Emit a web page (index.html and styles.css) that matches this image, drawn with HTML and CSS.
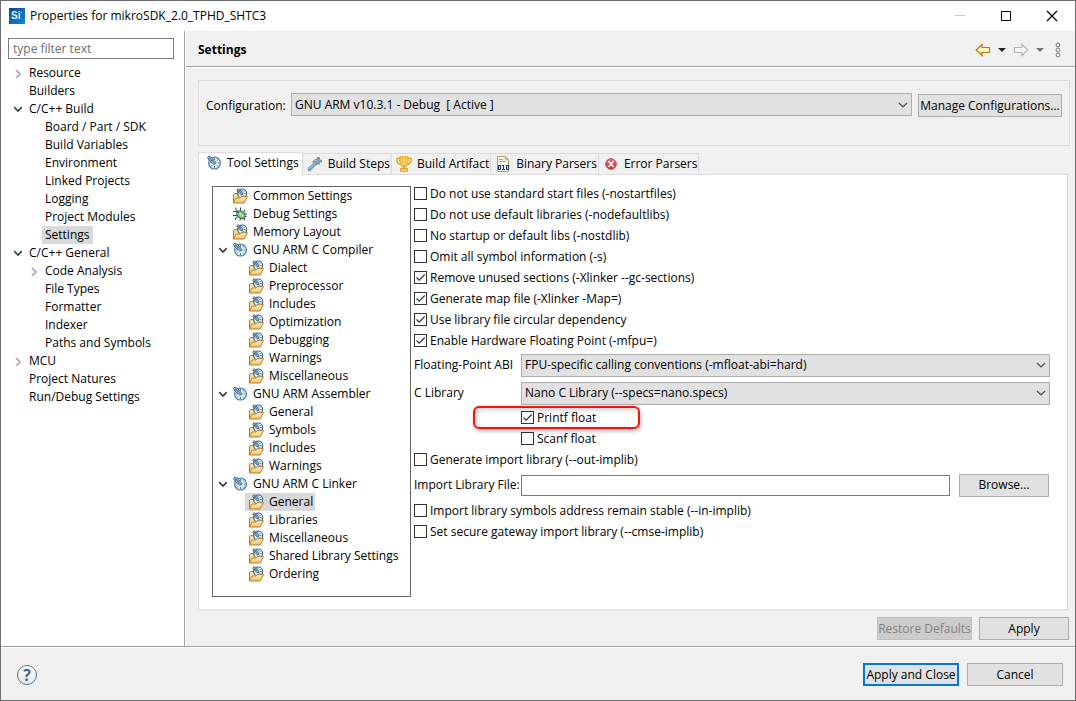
FILE: index.html
```html
<!DOCTYPE html>
<html lang="en">
<head>
<meta charset="utf-8">
<title>Properties for mikroSDK_2.0_TPHD_SHTC3</title>
<link rel="stylesheet" href="styles.css">
</head>
<body>
<svg class="sprite" aria-hidden="true">
  <defs>
    <linearGradient id="g-fold" x1="0" y1="0" x2="0" y2="1"><stop offset="0" stop-color="#fff3cf"/><stop offset="1" stop-color="#f3bd5c"/></linearGradient>
    <linearGradient id="g-red" x1="0" y1="0" x2="0" y2="1"><stop offset="0" stop-color="#e8727a"/><stop offset="1" stop-color="#d8232f"/></linearGradient>
    <linearGradient id="g-si" x1="0" y1="0" x2="1" y2="1"><stop offset="0" stop-color="#0b4a94"/><stop offset="1" stop-color="#1487d8"/></linearGradient>
  </defs>
  <symbol id="down" viewBox="0 0 10 10"><path d="M1.2 3.2 5 7l3.800-3.800" fill="none" stroke="#404040" stroke-width="1.700"/></symbol>
  <symbol id="right" viewBox="0 0 10 10"><path d="M3 2l4 4-4 4" fill="none" stroke="#a6a6a6" stroke-width="1.700"/></symbol>
  <symbol id="chev" viewBox="0 0 10 10"><path d="M1 3l4 4 4-4" fill="none" stroke="#505050" stroke-width="1.200"/></symbol>
  <symbol id="gauge" viewBox="0 0 16 16">
    <circle cx="8.500" cy="8" r="5.900" fill="#e4f1f8" stroke="#5585a6" stroke-width="1.300"/>
    <path d="M8.500 3v2M8.500 11v2M3.500 8h2M11.500 8h2M5 11.500l1.300-1.300M12 4.500l-1.200 1.200M12 11.500l-1.200-1.200" stroke="#4b84aa" stroke-width="1"/>
    <path d="M1.500 2.500 3 1l2.500 1.500L10 7.500 9 9 7.500 9 3 5Z" fill="#bcd0dc" stroke="#395b75" stroke-width=".9"/>
    <path d="M3 2.500l6 6M5 2.500l-2 2M7 4.500l-2 2" stroke="#203f59" stroke-width=".8"/>
  </symbol>
  <symbol id="folder" viewBox="0 0 16 16">
    <path d="M1.500 14V6.500l1-1h3l1 1.500H13v5" fill="#f8dd9c" stroke="#b47a2c"/>
    <circle cx="10.200" cy="5.500" r="4.500" fill="#e4f1f8" stroke="#35688f" stroke-width="1.200"/>
    <path d="M10 2v1.500M13.500 5.500H12M10 9V7.500M12.500 3l-1 1M12.500 8l-1-1" stroke="#387ba8" stroke-width=".9"/>
    <path d="M5 1.500 6.200.7 11 5.200 10.500 6.800 9 6.500 5 3Z" fill="#c7d9e3" stroke="#274861" stroke-width=".8"/>
    <path d="M6 1.800l4 4M8 2.500 6.500 4" stroke="#203f59" stroke-width=".7"/>
    <path d="M1.200 15 4 10H8l1-1.300h6.500L12 15Z" fill="url(#g-fold)" stroke="#b8812f"/>
  </symbol>
  <symbol id="bug" viewBox="0 0 16 16">
    <path d="M4 1.500v3l2 1.500M8.500 1.500v4M1 5.500h3l2 1.500M1 9.500h4M3.500 14v-2L6 10.500M8 14.500l.5-2.500M12.500 14.500 12 11.500M12 6l1-2.500M12 8h3M12.500 10.500h2" fill="none" stroke="#2b4f48" stroke-width="1"/>
    <ellipse cx="9" cy="8.800" rx="4.500" ry="3.400" transform="rotate(38 9 8.800)" fill="#8fc476" stroke="#22604d"/>
    <circle cx="5.700" cy="5.800" r="1.500" fill="#3f7b63"/>
    <path d="M7.500 7l4 3.500" stroke="#d3edb9" stroke-width="1.200"/>
  </symbol>
  <symbol id="wrench" viewBox="0 0 16 16">
    <path d="M.8 12 6 7.300l2.500 2.500L3.500 15H.8Z" fill="#7f9bad"/>
    <path d="M2 12.700l4-3.500" stroke="#c0cfd9"/>
    <path d="M5 6l3-3 2-.5V1h3v2.500l2 .5v2.500h-2V8.500h-2.500L8.500 9.800Z" fill="#7f9bad"/>
    <path d="M7.500 5l1.500-1 2 2.200" fill="none" stroke="#a9bfcc"/>
  </symbol>
  <symbol id="trophy" viewBox="0 0 16 16">
    <path d="M4 2.500H1v3.500l2 2h2M12 2.500h3v3.500l-2 2h-2" fill="none" stroke="#e9a51e" stroke-width="1.400"/>
    <path d="M4 .8h8v7L10 10H6L4 7.800Z" fill="#fbd46b" stroke="#e9a51e" stroke-width="1.200"/>
    <path d="M6.700 2v6M9.500 2v6" stroke="#eeb33b"/>
    <path d="M7 10h2v2H7ZM4.500 12.500h7v2.800h-7Z" fill="#f9cf62" stroke="#e3a027"/>
  </symbol>
  <symbol id="binary" viewBox="0 0 16 16">
    <path d="M2.500 15.500V.5h8L13.500 4v11.500Z" fill="#fbfaf0" stroke="#a99f72"/>
    <path d="M10.500.5V4H13.500Z" fill="#e8cf85" stroke="#b6a264" stroke-width=".7"/>
    <path d="M4 3.500h4M4 5.500h7" stroke="#86a5cd"/>
    <path d="M3.500 9.500h2v4h-2ZM7 9.500h1.500v4M7 13.500h3M11.500 9.500h2v4h-2Z" fill="none" stroke="#233f6f" stroke-width="1.200"/>
  </symbol>
  <symbol id="error" viewBox="0 0 16 16">
    <circle cx="8" cy="8" r="5.300" fill="url(#g-red)" stroke="#cf4850"/>
    <path d="M5.500 5l5 6M10.500 5l-5 6" stroke="#fff" stroke-width="1.700"/>
  </symbol>
</svg>

<div class="window">
  <header class="titlebar">
    <svg class="applogo" viewBox="0 0 16 16" aria-hidden="true"><rect width="16" height="16" fill="url(#g-si)"/><text class="logotext" x="2" y="11">Si</text><circle cx="12.500" cy="4.500" r=".8" fill="#7cc4f4"/></svg>
    <h1 class="wintitle">Properties for mikroSDK_2.0_TPHD_SHTC3</h1>
    <button class="winbtn" aria-label="Minimize"><svg viewBox="0 0 12 12"><path d="M1 5.500h10" stroke="#c8c8c8"/></svg></button>
    <button class="winbtn" aria-label="Maximize"><svg viewBox="0 0 12 12"><path d="M1.500 1.500h9v9h-9Z" fill="none" stroke="#000"/></svg></button>
    <button class="winbtn" aria-label="Close"><svg viewBox="0 0 12 12"><path d="M1 1l10 10M11 1 1 11" stroke="#000" stroke-width="1.200"/></svg></button>
  </header>

  <div class="body">
    <nav class="side">
      <input class="field filter" type="text" placeholder="type filter text" aria-label="Filter">
      <ul class="tree" role="tree">
        <li><svg class="arrow"><use href="#right"/></svg><span class="name">Resource</span></li>
        <li><i class="arrow"></i><span class="name">Builders</span></li>
        <li><svg class="arrow"><use href="#down"/></svg><span class="name">C/C++ Build</span></li>
        <li class="sub"><i class="arrow"></i><span class="name">Board / Part / SDK</span></li>
        <li class="sub"><i class="arrow"></i><span class="name">Build Variables</span></li>
        <li class="sub"><i class="arrow"></i><span class="name">Environment</span></li>
        <li class="sub"><i class="arrow"></i><span class="name">Linked Projects</span></li>
        <li class="sub"><i class="arrow"></i><span class="name">Logging</span></li>
        <li class="sub"><i class="arrow"></i><span class="name">Project Modules</span></li>
        <li class="sub"><i class="arrow"></i><span class="name selected">Settings</span></li>
        <li><svg class="arrow"><use href="#down"/></svg><span class="name">C/C++ General</span></li>
        <li class="sub"><svg class="arrow"><use href="#right"/></svg><span class="name">Code Analysis</span></li>
        <li class="sub"><i class="arrow"></i><span class="name">File Types</span></li>
        <li class="sub"><i class="arrow"></i><span class="name">Formatter</span></li>
        <li class="sub"><i class="arrow"></i><span class="name">Indexer</span></li>
        <li class="sub"><i class="arrow"></i><span class="name">Paths and Symbols</span></li>
        <li><svg class="arrow"><use href="#right"/></svg><span class="name">MCU</span></li>
        <li><i class="arrow"></i><span class="name">Project Natures</span></li>
        <li><i class="arrow"></i><span class="name">Run/Debug Settings</span></li>
      </ul>
    </nav>

    <main class="main">
      <div class="pagehead">
        <h2 class="pagetitle">Settings</h2>
        <div class="navtools">
          <button class="tool" aria-label="Back"><svg width="16" height="14" viewBox="0 0 16 14"><path d="M1.200 7 7 1.500V4.500h7.500v5H7v3Z" fill="#fff3c4" stroke="#b57a14" stroke-width="1.200"/></svg></button>
          <button class="tool" aria-label="Back history"><svg width="8" height="4" viewBox="0 0 8 4"><path d="M0 0h8L4 4Z" fill="#222"/></svg></button>
          <button class="tool" aria-label="Forward"><svg width="16" height="14" viewBox="0 0 16 14"><path d="M14.800 7 9 1.500V4.500H1.500v5H9v3Z" fill="#f5f5f5" stroke="#b5b5b5" stroke-width="1.200"/></svg></button>
          <button class="tool" aria-label="Forward history"><svg width="8" height="4" viewBox="0 0 8 4"><path d="M0 0h8L4 4Z" fill="#777"/></svg></button>
          <button class="tool more" aria-label="Menu"><svg width="8" height="16" viewBox="0 0 8 16"><g fill="#fff" stroke="#777"><circle cx="4" cy="3" r="1.900"/><circle cx="4" cy="8" r="1.900"/><circle cx="4" cy="13" r="1.900"/></g></svg></button>
        </div>
      </div>

      <div class="content">
        <div class="config">
          <label for="cfg">Configuration:</label>
          <span class="combo"><select id="cfg"><option>GNU ARM v10.3.1 - Debug&nbsp; [ Active ]</option></select><svg><use href="#chev"/></svg></span>
          <button class="btn manage">Manage Configurations...</button>
        </div>

        <div class="tabs" role="tablist">
          <button class="tab active" role="tab" aria-selected="true"><svg><use href="#gauge"/></svg>Tool Settings</button>
          <button class="tab" role="tab"><svg><use href="#wrench"/></svg>Build Steps</button>
          <button class="tab" role="tab"><svg><use href="#trophy"/></svg>Build Artifact</button>
          <button class="tab" role="tab"><svg><use href="#binary"/></svg>Binary Parsers</button>
          <button class="tab" role="tab"><svg><use href="#error"/></svg>Error Parsers</button>
        </div>

        <section class="panel" role="tabpanel">
          <ul class="tooltree" role="tree">
            <li><i class="arrow"></i><span class="node"><svg><use href="#folder"/></svg>Common Settings</span></li>
            <li><i class="arrow"></i><span class="node"><svg><use href="#bug"/></svg>Debug Settings</span></li>
            <li><i class="arrow"></i><span class="node"><svg><use href="#folder"/></svg>Memory Layout</span></li>
            <li><svg class="arrow"><use href="#down"/></svg><span class="node"><svg><use href="#gauge"/></svg>GNU ARM C Compiler</span></li>
            <li class="sub"><i class="arrow"></i><span class="node"><svg><use href="#folder"/></svg>Dialect</span></li>
            <li class="sub"><i class="arrow"></i><span class="node"><svg><use href="#folder"/></svg>Preprocessor</span></li>
            <li class="sub"><i class="arrow"></i><span class="node"><svg><use href="#folder"/></svg>Includes</span></li>
            <li class="sub"><i class="arrow"></i><span class="node"><svg><use href="#folder"/></svg>Optimization</span></li>
            <li class="sub"><i class="arrow"></i><span class="node"><svg><use href="#folder"/></svg>Debugging</span></li>
            <li class="sub"><i class="arrow"></i><span class="node"><svg><use href="#folder"/></svg>Warnings</span></li>
            <li class="sub"><i class="arrow"></i><span class="node"><svg><use href="#folder"/></svg>Miscellaneous</span></li>
            <li><svg class="arrow"><use href="#down"/></svg><span class="node"><svg><use href="#gauge"/></svg>GNU ARM Assembler</span></li>
            <li class="sub"><i class="arrow"></i><span class="node"><svg><use href="#folder"/></svg>General</span></li>
            <li class="sub"><i class="arrow"></i><span class="node"><svg><use href="#folder"/></svg>Symbols</span></li>
            <li class="sub"><i class="arrow"></i><span class="node"><svg><use href="#folder"/></svg>Includes</span></li>
            <li class="sub"><i class="arrow"></i><span class="node"><svg><use href="#folder"/></svg>Warnings</span></li>
            <li><svg class="arrow"><use href="#down"/></svg><span class="node"><svg><use href="#gauge"/></svg>GNU ARM C Linker</span></li>
            <li class="sub"><i class="arrow"></i><span class="node selected"><svg><use href="#folder"/></svg>General</span></li>
            <li class="sub"><i class="arrow"></i><span class="node"><svg><use href="#folder"/></svg>Libraries</span></li>
            <li class="sub"><i class="arrow"></i><span class="node"><svg><use href="#folder"/></svg>Miscellaneous</span></li>
            <li class="sub"><i class="arrow"></i><span class="node"><svg><use href="#folder"/></svg>Shared Library Settings</span></li>
            <li class="sub"><i class="arrow"></i><span class="node"><svg><use href="#folder"/></svg>Ordering</span></li>
          </ul>

          <form class="options">
            <label class="check"><input type="checkbox">Do not use standard start files (-nostartfiles)</label>
            <label class="check"><input type="checkbox">Do not use default libraries (-nodefaultlibs)</label>
            <label class="check"><input type="checkbox">No startup or default libs (-nostdlib)</label>
            <label class="check"><input type="checkbox">Omit all symbol information (-s)</label>
            <label class="check"><input type="checkbox" checked>Remove unused sections (-Xlinker --gc-sections)</label>
            <label class="check"><input type="checkbox" checked>Generate map file (-Xlinker -Map=)</label>
            <label class="check"><input type="checkbox" checked>Use library file circular dependency</label>
            <label class="check"><input type="checkbox" checked>Enable Hardware Floating Point (-mfpu=)</label>
            <div class="row">
              <label for="abi">Floating-Point ABI</label>
              <span class="combo"><select id="abi"><option>FPU-specific calling conventions (-mfloat-abi=hard)</option></select><svg><use href="#chev"/></svg></span>
            </div>
            <div class="row">
              <label for="clib">C Library</label>
              <span class="combo"><select id="clib"><option>Nano C Library (--specs=nano.specs)</option></select><svg><use href="#chev"/></svg></span>
            </div>
            <label class="check nested marked"><span class="marker"></span><input type="checkbox" checked>Printf float</label>
            <label class="check nested"><input type="checkbox">Scanf float</label>
            <label class="check"><input type="checkbox">Generate import library (--out-implib)</label>
            <div class="row file">
              <label for="implib">Import Library File:</label>
              <span class="filebox"><input class="field" id="implib" type="text"><button class="btn" type="button">Browse...</button></span>
            </div>
            <label class="check"><input type="checkbox">Import library symbols address remain stable (--in-implib)</label>
            <label class="check"><input type="checkbox">Set secure gateway import library (--cmse-implib)</label>
          </form>
        </section>

        <div class="pageactions">
          <button class="btn restore" disabled>Restore Defaults</button>
          <button class="btn">Apply</button>
        </div>
      </div>
    </main>
  </div>

  <footer class="footer">
    <button class="help" aria-label="Help">?</button>
    <button class="btn wide primary">Apply and Close</button>
    <button class="btn wide">Cancel</button>
  </footer>
</div>
</body>
</html>
```
FILE: styles.css
```css
* { box-sizing: border-box; }
body {
  margin: 0;
  font: 12px/18px "Open Sans", "Noto Sans", sans-serif;
  color: #000;
}
button, input, select { font: inherit; color: inherit; margin: 0; padding: 0; }
ul { list-style: none; margin: 0; padding: 0; }
h1, h2 { margin: 0; font-size: 12px; }
svg { flex: none; }
.sprite { position: absolute; width: 0; height: 0; }

.window {
  display: flex;
  flex-direction: column;
  min-height: 100vh;
  background: #f0f0f0;
  border: 1px solid #6e6e6e;
}

.titlebar { display: flex; align-items: center; height: 30px; padding-left: 8px; background: #fff; }
.applogo { width: 16px; height: 16px; margin-right: 5px; }
.logotext { font: bold 10px "Liberation Sans", sans-serif; fill: #d8efff; }
.wintitle { flex: 1; font-weight: normal; }
.winbtn { display: grid; place-items: center; width: 46px; height: 30px; border: 0; background: none; }
.winbtn svg { width: 12px; height: 12px; }

.body { flex: 1; display: flex; border-bottom: 1px solid #a0a0a0; }
.side { width: 184px; padding: 7px 10px 0 7px; background: #fff; border-right: 1px solid #a0a0a0; }
.field { height: 21px; border: 1px solid #7a7a7a; background: #fff; border-radius: 0; }
.filter { width: 100%; padding: 0 4px; }
.filter::placeholder { color: #6d6d6d; opacity: 1; }
.tree { padding-top: 5px; white-space: nowrap; }
.tree li { display: flex; align-items: center; height: 18px; padding-left: 5px; }
.tree li.sub { padding-left: 21px; }
.arrow { width: 10px; height: 10px; flex: none; }
.name { margin-left: 3px; padding: 0 3px; }
.selected { background: #d9d9d9; }

.main { flex: 1; min-width: 0; display: flex; flex-direction: column; border-left: 1px solid #fff; }
.pagehead {
  display: flex;
  align-items: center;
  justify-content: space-between;
  height: 36px;
  padding: 3px 13px 0 12px;
  border-bottom: 1px solid #a0a0a0;
}
.pagetitle { font-weight: bold; }
.navtools { display: flex; align-items: center; gap: 7px; }
.tool { display: grid; place-items: center; padding: 0; border: 0; background: none; }
.more { margin-left: 3px; }

.content { flex: 1; display: flex; flex-direction: column; padding: 12px 5px 6px 12px; border-top: 1px solid #fff; }
.config { display: flex; align-items: flex-start; height: 66px; padding: 12px 7px; border: 1px solid #dcdcdc; }
.config label { width: 85px; line-height: 25px; white-space: nowrap; }
.config .combo { flex: 1; }

.combo { display: grid; }
.combo > * { grid-area: 1 / 1; }
.combo select {
  appearance: none;
  width: 100%;
  height: 23px;
  padding: 0 24px 0 3px;
  border: 1px solid #adadad;
  border-radius: 0;
  background: #e1e1e1;
}
.combo svg { width: 10px; height: 10px; margin-right: 4px; place-self: center end; pointer-events: none; }

.btn {
  width: 90px;
  height: 23px;
  border: 1px solid #adadad;
  background: #e1e1e1;
  white-space: nowrap;
  line-height: 18px;
}
.btn:disabled { background: #ccc; border-color: #bfbfbf; color: #838383; }
.btn.wide { width: 96px; }
.btn.manage { width: 144px; margin: 1px 0 0 6px; }
.btn.restore { width: 95px; }
.btn.primary { border: 2px solid #0078d7; }

.tabs { display: flex; align-items: flex-end; margin-top: 6px; }
.tab {
  display: flex;
  align-items: center;
  gap: 5px;
  height: 21px;
  padding: 0 1px 0 4px;
  border: 1px solid #dcdcdc;
  border-width: 1px 1px 0 0;
  background: #f0f0f0;
  white-space: nowrap;
}
.tab svg { width: 16px; height: 16px; }
.tab.active { height: 23px; margin-bottom: -1px; padding: 0 3px 2px 7px; border-left-width: 1px; background: #fff; z-index: 1; }

.panel {
  flex: 1;
  display: flex;
  gap: 3px;
  margin-right: 2px;
  padding: 8px 17px 12px 13px;
  background: #fff;
  border: 1px solid #dcdcdc;
}
.tooltree { width: 199px; margin-top: 3px; border: 1px solid #646464; white-space: nowrap; }
.tooltree li { display: flex; align-items: center; height: 18px; padding-left: 5px; }
.tooltree li.sub { padding-left: 21px; }
.node { display: flex; align-items: center; gap: 5px; height: 18px; margin-left: 1px; padding: 0 2px 0 3px; }
.node svg { width: 16px; height: 16px; }

.options { flex: 1; min-width: 0; }
.check { display: flex; align-items: center; gap: 3px; height: 21px; white-space: nowrap; }
.check input { appearance: none; flex: none; width: 13px; height: 13px; border: 1px solid #333; background: #fff; }
.check input:checked {
  background: #fff url("data:image/svg+xml,%3Csvg xmlns='http://www.w3.org/2000/svg' viewBox='0 0 11 11'%3E%3Cpath d='M1.500 5.500l2.700 2.700L9.700 2.500' fill='none' stroke='%23333' stroke-width='1.200'/%3E%3C/svg%3E") center / 11px 11px no-repeat;
}
.check.nested { padding-left: 107px; }
.marked { position: relative; }
.marker {
  position: absolute;
  left: 59px;
  top: -1px;
  width: 167px;
  height: 23px;
  border: 2px solid #f01414;
  border-radius: 6px;
  box-shadow: 1px 2px 4px rgba(0, 0, 0, .3), inset 2px 2px 5px rgba(0, 0, 0, .2);
}
.marked input { z-index: 1; }
.row { display: grid; grid-template-columns: 107px 1fr; align-items: center; height: 28px; white-space: nowrap; }
.row.file { height: 30px; }
.filebox { display: flex; align-items: center; gap: 9px; padding-right: 1px; }
.filebox .field { flex: 1; min-width: 0; }

.pageactions { display: flex; justify-content: flex-end; gap: 7px; margin: 7px 1px 0 0; }

.footer { display: flex; align-items: center; gap: 8px; height: 53px; padding: 1px 12px 0 16px; border-top: 1px solid #fff; }
.help {
  width: 20px;
  height: 20px;
  margin-right: auto;
  border: 1px solid #5a6f96;
  border-radius: 50%;
  background: linear-gradient(#fff, #e6e6e6);
  color: #4b6290;
  font: bold 16px/18px "Open Sans", sans-serif;
}
```
